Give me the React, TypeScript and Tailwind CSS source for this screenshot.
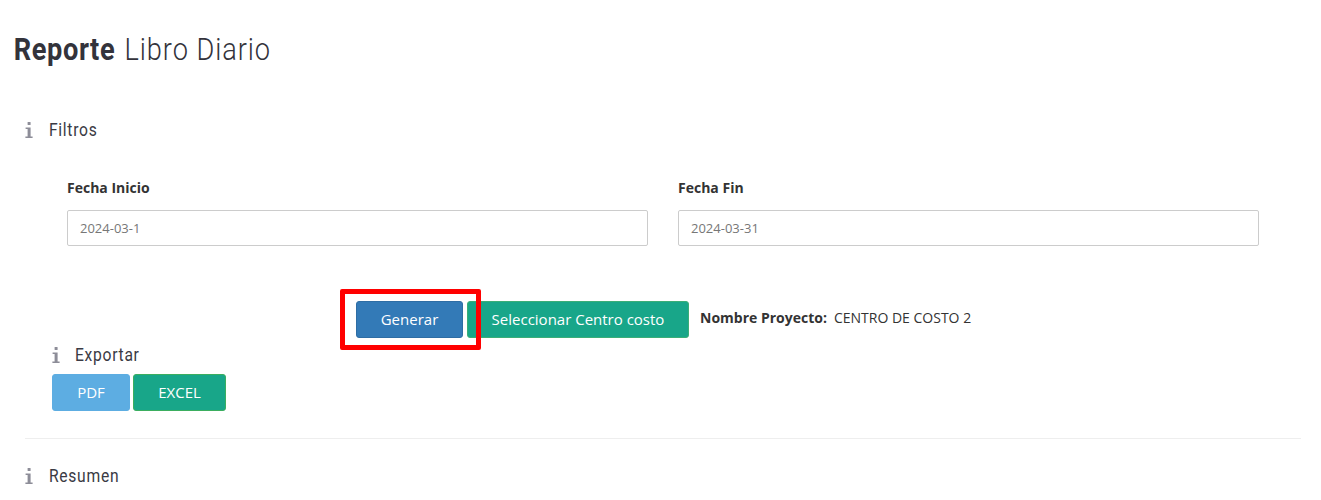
const headingFont = "font-['Roboto',sans-serif]"

function InfoIcon() {
  return (
    <svg viewBox="0 0 8 16" className="w-[8px] h-[16px] fill-[#8d8d98]">
      <rect x="2.6" y="0" width="3" height="3" rx="0.6" />
      <path d="M0.6 5.4H5.6V14.4H7.6V16H0.4V14.4H2.6V7H0.6Z" />
    </svg>
  )
}

function SectionTitle({ label, gap = 'w-[24px]', className = '' }: { label: string; gap?: string; className?: string }) {
  return (
    <div className={`flex items-center h-[24px] ${className}`}>
      <span className={`${gap} flex items-center`}>
        <InfoIcon />
      </span>
      <span className={`${headingFont} text-[18px] leading-[22px] tracking-[0.8px] text-[#3a3a44] [transform:scaleX(0.87)] origin-left`}>{label}</span>
    </div>
  )
}

function DateField({ label, value }: { label: string; value: string }) {
  return (
    <div className="w-[581px]">
      <label className="block text-[14px] leading-[20px] font-bold text-[#333]">{label}</label>
      <input
        readOnly
        value={value}
        className="mt-[12px] block w-full h-[36px] px-[12px] border border-[#ccc] rounded-[2px] bg-white text-[13px] text-[#777] outline-none"
      />
    </div>
  )
}

export default function App() {
  return (
    <div className="h-[500px] overflow-hidden bg-white font-['Open_Sans',sans-serif] text-[#333]">
      <h1 className={`${headingFont} ml-[1px] pl-[15px] pt-[30px] text-[32px] leading-[38px] text-[#33333b] font-light tracking-[1.1px] [transform:scaleX(0.85)] origin-left`}>
        <span className="font-bold tracking-[0.7px]">Reporte</span> <span className="ml-[2px]">Libro Diario</span>
      </h1>

      <div className="px-[25px] pt-[50px]">
        <SectionTitle label="Filtros" />

        <div className="flex gap-[30px] pl-[42px] pt-[36px]">
          <DateField label="Fecha Inicio" value="2024-03-1" />
          <DateField label="Fecha Fin" value="2024-03-31" />
        </div>

        <div className="flex items-center pl-[331px] pt-[55px]">
          <div className="relative">
            <button className="block w-[107px] h-[37px] rounded-[3px] border border-[#2e6da4] bg-[#337ab7] text-[15px] text-white">
              Generar
            </button>
            <div className="absolute left-[-16px] top-[-12px] w-[141px] h-[61px] border-[5px] border-[#ff0000] rounded-[2px] pointer-events-none" />
          </div>
          <button className="ml-[4px] w-[222px] h-[37px] rounded-[3px] border border-[#3bae77] bg-[#18a689] text-[15px] text-white">
            Seleccionar Centro costo
          </button>
          <div className="ml-[11px] text-[14px] leading-[20px] text-[#333] mt-[-4px]">
            <span className="font-bold">Nombre Proyecto:</span>
            <span className="ml-[7px]">CENTRO DE COSTO 2</span>
          </div>
        </div>

        <div className="pl-[27px] pt-[5px]">
          <SectionTitle label="Exportar" gap="w-[23px]" />
          <div className="flex gap-[3px] pt-[7px]">
            <button className="w-[78px] h-[37px] rounded-[3px] border border-[#5dade2] bg-[#5dade2] text-[15px] text-white">PDF</button>
            <button className="w-[93px] h-[37px] rounded-[3px] border border-[#3bae5f] bg-[#18a689] text-[15px] text-white">EXCEL</button>
          </div>
        </div>

        <div className="mt-[27px] w-[1276px] border-t border-[#eee]" />

        <SectionTitle label="Resumen" className="mt-[25px]" />
      </div>
    </div>
  )
}
